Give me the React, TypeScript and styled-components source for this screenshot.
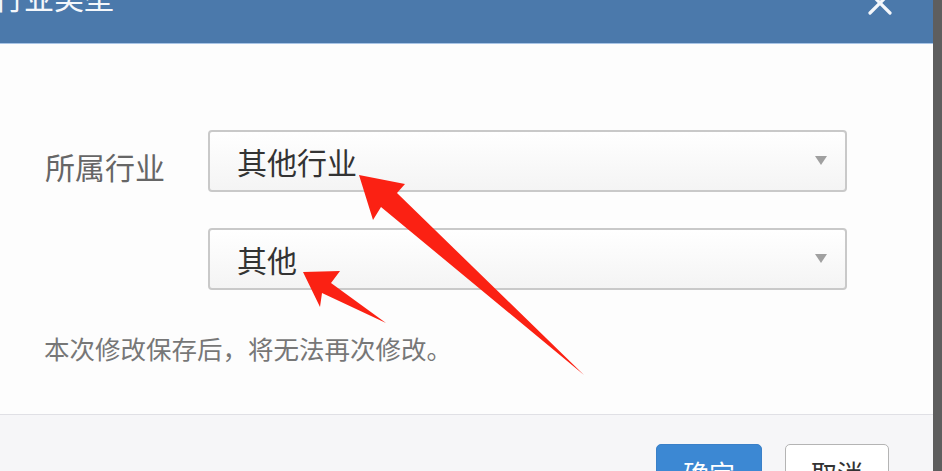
import React from "react";
import styled, { createGlobalStyle } from "styled-components";

const GlobalStyle = createGlobalStyle`
  html, body {
    margin: 0;
    padding: 0;
    background: #5e5e5e;
    overflow: hidden;
  }
  body {
    font-family: "Noto Sans CJK SC", "Noto Sans", sans-serif;
  }
`;

const Page = styled.div`
  position: relative;
  width: 942px;
  height: 471px;
  overflow: hidden;
  background: #5e5e5e;
`;

const Dialog = styled.div`
  width: 933px;
  display: flex;
  flex-direction: column;
  background: #fdfdfd;
`;

const Header = styled.div`
  height: 43px;
  flex: none;
  display: flex;
  align-items: flex-start;
  justify-content: space-between;
  background: #4b79ab;
  border-bottom: 1px solid #a9c5e6;
  padding-right: 41px;
  overflow: hidden;
`;

const Title = styled.div`
  margin-top: -19px;
  margin-left: -6px;
  font-size: 30px;
  line-height: 30px;
  color: #f4f7fb;
  white-space: nowrap;
`;

const Close = styled.svg`
  margin-top: -9px;
  width: 24px;
  height: 24px;
  flex: none;
`;

const Body = styled.div`
  height: 370px;
  box-sizing: border-box;
  flex: none;
  display: flex;
  flex-direction: column;
  padding-top: 86px;
`;

const Row = styled.div<{ $gap?: number }>`
  display: flex;
  align-items: center;
  margin-bottom: ${(p) => p.$gap ?? 0}px;
`;

const Label = styled.div`
  width: 208px;
  flex: none;
  padding-left: 45px;
  box-sizing: border-box;
  font-size: 30px;
  line-height: 30px;
  color: #666;
  padding-top: 10px;
  white-space: nowrap;
`;

const Select = styled.div<{ $indent?: number }>`
  box-sizing: border-box;
  width: 639px;
  height: 62px;
  margin-left: ${(p) => p.$indent ?? 0}px;
  display: flex;
  align-items: center;
  justify-content: space-between;
  padding: 0 18px 0 27px;
  border: 2px solid #c9c9c9;
  border-radius: 4px;
  background: linear-gradient(#ffffff, #f4f4f4);
  font-size: 30px;
  line-height: 30px;
  color: #333;
`;

const Caret = styled.span`
  width: 0;
  height: 0;
  border-left: 6px solid transparent;
  border-right: 6px solid transparent;
  border-top: 9px solid #a0a0a0;
  margin-top: -2px;
`;

const Note = styled.div`
  margin-top: 43px;
  padding-left: 44px;
  font-size: 25.5px;
  line-height: 30px;
  color: #777;
`;

const Footer = styled.div`
  height: 100px;
  flex: none;
  display: flex;
  justify-content: flex-end;
  align-items: flex-start;
  gap: 23px;
  padding: 29px 44px 0 0;
  background: #f6f6f8;
  border-top: 1px solid #e0e0e5;
`;

const Button = styled.div<{ $primary?: boolean }>`
  box-sizing: border-box;
  width: ${(p) => (p.$primary ? 106 : 104)}px;
  height: 52px;
  border-radius: 5px;
  display: flex;
  justify-content: center;
  padding-top: 13px;
  font-size: 26px;
  line-height: 30px;
  color: ${(p) => (p.$primary ? "#fff" : "#333")};
  background: ${(p) => (p.$primary ? "#3c88d3" : "#fff")};
  border: 1.5px solid ${(p) => (p.$primary ? "#3a80c8" : "#b4b4b4")};
`;

const Annotation = styled.svg`
  position: absolute;
  left: 0;
  top: 0;
  width: 942px;
  height: 471px;
  pointer-events: none;
`;

export default function App() {
  return (
    <Page>
      <GlobalStyle />
      <Dialog>
        <Header>
          <Title>行业类型</Title>
          <Close viewBox="0 0 24 24">
            <path d="M2 2 L22 22 M22 2 L2 22" stroke="#f4f7fb" strokeWidth="3.2" strokeLinecap="round" />
          </Close>
        </Header>
        <Body>
          <Row $gap={36}>
            <Label>所属行业</Label>
            <Select>
              <span>其他行业</span>
              <Caret />
            </Select>
          </Row>
          <Row>
            <Select $indent={208}>
              <span>其他</span>
              <Caret />
            </Select>
          </Row>
          <Note>本次修改保存后，将无法再次修改。</Note>
        </Body>
        <Footer>
          <Button $primary>确定</Button>
          <Button>取消</Button>
        </Footer>
      </Dialog>
      <Annotation viewBox="0 0 942 471">
        <polygon
          points="359,175 405,184 397,193 584,375 381,207 373,220"
          fill="#fb2113"
        />
        <polygon
          points="303,272 340,271 331,283 386,323 322,293 320,307"
          fill="#fb2113"
        />
      </Annotation>
    </Page>
  );
}
